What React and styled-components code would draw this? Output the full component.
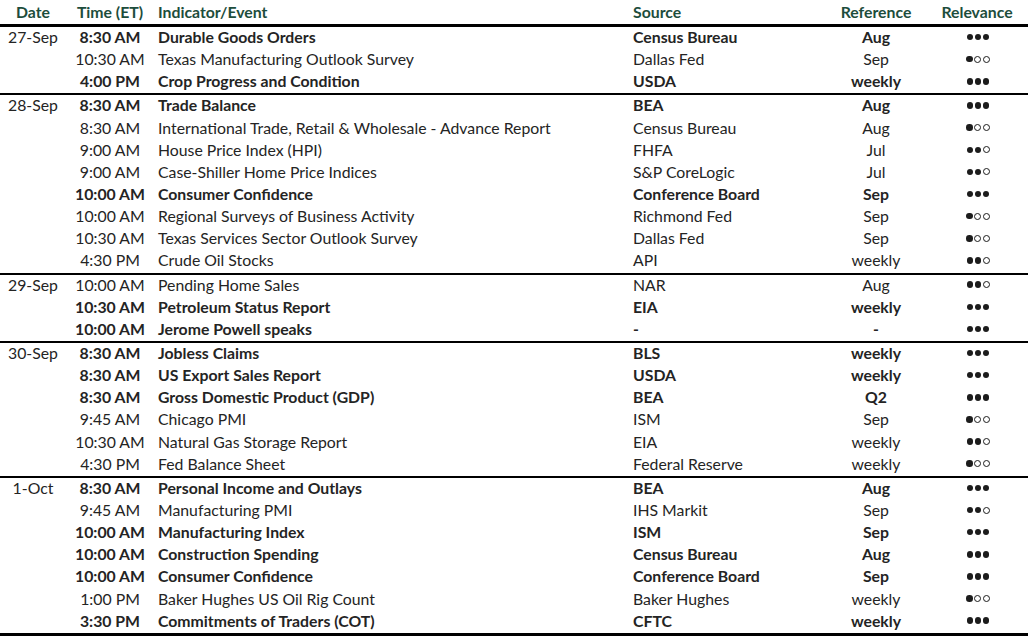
import React from "react";
import styled, { createGlobalStyle } from "styled-components";

const GlobalStyle = createGlobalStyle`
  html, body {
    margin: 0;
    padding: 0;
    background: #fff;
  }
  body {
    font-family: Lato, "Noto Sans", sans-serif;
    color: #242424;
  }
`;

const days = [
  {
    date: "27-Sep",
    rows: [
      ["8:30 AM", "Durable Goods Orders", "Census Bureau", "Aug", 3, true],
      ["10:30 AM", "Texas Manufacturing Outlook Survey", "Dallas Fed", "Sep", 1, false],
      ["4:00 PM", "Crop Progress and Condition", "USDA", "weekly", 3, true],
    ],
  },
  {
    date: "28-Sep",
    rows: [
      ["8:30 AM", "Trade Balance", "BEA", "Aug", 3, true],
      ["8:30 AM", "International Trade, Retail & Wholesale - Advance Report", "Census Bureau", "Aug", 1, false],
      ["9:00 AM", "House Price Index (HPI)", "FHFA", "Jul", 2, false],
      ["9:00 AM", "Case-Shiller Home Price Indices", "S&P CoreLogic", "Jul", 2, false],
      ["10:00 AM", "Consumer Confidence", "Conference Board", "Sep", 3, true],
      ["10:00 AM", "Regional Surveys of Business Activity", "Richmond Fed", "Sep", 1, false],
      ["10:30 AM", "Texas Services Sector Outlook Survey", "Dallas Fed", "Sep", 1, false],
      ["4:30 PM", "Crude Oil Stocks", "API", "weekly", 2, false],
    ],
  },
  {
    date: "29-Sep",
    rows: [
      ["10:00 AM", "Pending Home Sales", "NAR", "Aug", 2, false],
      ["10:30 AM", "Petroleum Status Report", "EIA", "weekly", 3, true],
      ["10:00 AM", "Jerome Powell speaks", "-", "-", 3, true],
    ],
  },
  {
    date: "30-Sep",
    rows: [
      ["8:30 AM", "Jobless Claims", "BLS", "weekly", 3, true],
      ["8:30 AM", "US Export Sales Report", "USDA", "weekly", 3, true],
      ["8:30 AM", "Gross Domestic Product (GDP)", "BEA", "Q2", 3, true],
      ["9:45 AM", "Chicago PMI", "ISM", "Sep", 1, false],
      ["10:30 AM", "Natural Gas Storage Report", "EIA", "weekly", 2, false],
      ["4:30 PM", "Fed Balance Sheet", "Federal Reserve", "weekly", 1, false],
    ],
  },
  {
    date: "1-Oct",
    rows: [
      ["8:30 AM", "Personal Income and Outlays", "BEA", "Aug", 3, true],
      ["9:45 AM", "Manufacturing PMI", "IHS Markit", "Sep", 2, false],
      ["10:00 AM", "Manufacturing Index", "ISM", "Sep", 3, true],
      ["10:00 AM", "Construction Spending", "Census Bureau", "Aug", 3, true],
      ["10:00 AM", "Consumer Confidence", "Conference Board", "Sep", 3, true],
      ["1:00 PM", "Baker Hughes US Oil Rig Count", "Baker Hughes", "weekly", 1, false],
      ["3:30 PM", "Commitments of Traders (COT)", "CFTC", "weekly", 3, true],
    ],
  },
];

const cols = "66px 88px 475px 197px 100px 102px";

const Table = styled.div`
  width: 1028px;
  font-size: 15.8px;
`;

const HeaderRow = styled.div`
  display: grid;
  grid-template-columns: ${cols};
  box-sizing: border-box;
  height: 27px;
  padding-bottom: 1px;
  align-items: center;
  color: #1d4d3c;
  font-weight: 700;
  border-bottom: 3px solid #000;
`;

const Group = styled.div`
  border-bottom: ${(p) => (p.last ? "3px" : "2px")} solid #000;
`;

const Row = styled.div`
  display: grid;
  grid-template-columns: ${cols};
  box-sizing: border-box;
  height: 22.15px;
  padding-bottom: 2px;
  align-items: center;
  font-weight: ${(p) => (p.bold ? 700 : 400)};
  white-space: nowrap;
`;

const Cell = styled.div`
  text-align: ${(p) => p.align || "left"};
  padding-left: ${(p) => (p.align === "left" ? "4px" : "0")};
  line-height: 20px;
`;

const DateCell = styled(Cell)`
  font-weight: 400;
`;

const Dots = styled.div`
  display: flex;
  justify-content: center;
  align-items: center;
  gap: 1.5px;
  padding-left: 2px;
`;

const Dot = styled.span`
  display: block;
  box-sizing: border-box;
  width: ${(p) => (p.filled ? "6.5px" : "7px")};
  height: ${(p) => (p.filled ? "6.5px" : "7px")};
  border-radius: 50%;
  background: ${(p) => (p.filled ? "#1c1c1c" : "transparent")};
  border: ${(p) => (p.filled ? "none" : "1px solid #1c1c1c")};
`;

function Relevance({ level }) {
  return (
    <Dots>
      {[0, 1, 2].map((i) => (
        <Dot key={i} filled={i < level} />
      ))}
    </Dots>
  );
}

export default function App() {
  return (
    <>
      <GlobalStyle />
      <Table>
        <HeaderRow>
          <Cell align="center">Date</Cell>
          <Cell align="center">Time (ET)</Cell>
          <Cell align="left">Indicator/Event</Cell>
          <Cell align="left">Source</Cell>
          <Cell align="center">Reference</Cell>
          <Cell align="center">Relevance</Cell>
        </HeaderRow>
        {days.map((day, di) => (
          <Group key={day.date} last={di === days.length - 1}>
            {day.rows.map(([time, event, source, ref, level, bold], ri) => (
              <Row key={ri} bold={bold}>
                <DateCell align="center">{ri === 0 ? day.date : ""}</DateCell>
                <Cell align="center">{time}</Cell>
                <Cell align="left">{event}</Cell>
                <Cell align="left">{source}</Cell>
                <Cell align="center">{ref}</Cell>
                <Relevance level={level} />
              </Row>
            ))}
          </Group>
        ))}
      </Table>
    </>
  );
}
